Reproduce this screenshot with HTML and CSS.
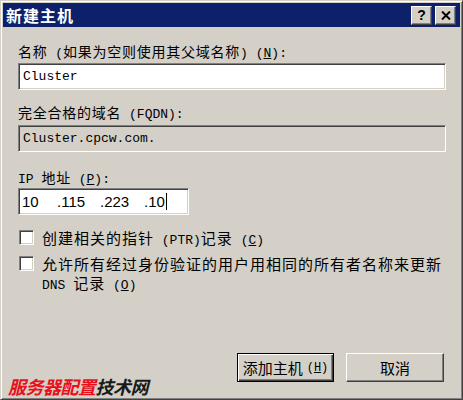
FILE: index.html
```html
<!DOCTYPE html>
<html lang="zh-CN">
<head>
<meta charset="utf-8">
<title>新建主机</title>
<link rel="stylesheet" href="styles.css">
</head>
<body>
<div class="window">
  <div class="titlebar">
    <span class="title">新建主机</span>
    <div class="title-buttons">
      <span class="tbtn help">?</span>
      <span class="tbtn close">
        <svg width="10" height="9" viewBox="0 0 10 9"><path d="M1 0.5 L9 8.5 M9 0.5 L1 8.5" stroke="#000" stroke-width="2"/></svg>
      </span>
    </div>
  </div>
  <div class="content">
    <div class="label l1">名称<span class="mono"> (</span>如果为空则使用其父域名称<span class="mono">) (<u>N</u>):</span></div>
    <div class="field mono">Cluster</div>
    <div class="label l2">完全合格的域名<span class="mono"> (FQDN):</span></div>
    <div class="field disabled mono">Cluster.cpcw.com.</div>
    <div class="label l3"><span class="mono">IP </span>地址<span class="mono"> (<u>P</u>):</span></div>
    <div class="field ip">
      <span class="oct">10</span><span class="oct">.115</span><span class="oct">.223</span><span class="oct last">.10</span><span class="caret"></span>
    </div>
    <div class="check-row r1">
      <span class="cb"></span>
      <span class="ctext">创建相关的指针<span class="mono"> (PTR)</span>记录<span class="mono"> (<u>C</u>)</span></span>
    </div>
    <div class="check-row r2">
      <span class="cb"></span>
      <span class="ctext">允许所有经过身份验证的用户用相同的所有者名称来更新<br><span class="mono">DNS </span>记录<span class="mono"> (<u>O</u>)</span></span>
    </div>
    <div class="buttons">
      <span class="btn default">添加主机<span class="gap"></span><span class="mono">(<u>H</u>)</span></span>
      <span class="btn">取消</span>
    </div>
  </div>
  <div class="watermark"><span class="red">服务器配置</span><span class="dark">技术网</span></div>
</div>
</body>
</html>
```
FILE: styles.css
```css
* { box-sizing: border-box; }
html, body { margin: 0; padding: 0; }
body {
  width: 463px;
  height: 400px;
  background: #d4d0c8;
  font-family: "Noto Sans CJK SC", "Liberation Sans", sans-serif;
  font-size: 14px;
  color: #000;
  overflow: hidden;
}
.window {
  position: relative;
  width: 463px;
  height: 400px;
  background: #d4d0c8;
  border: 1px solid;
  border-color: #d4d0c8 #404040 #404040 #d4d0c8;
  box-shadow: inset 1px 1px 0 #fff, inset -1px -1px 0 #808080;
  padding: 2px;
  display: flex;
  flex-direction: column;
}
.titlebar {
  height: 24px;
  background: #0c216a;
  display: flex;
  align-items: center;
  justify-content: space-between;
  padding: 0 4px 0 3px;
}
.title {
  color: #fff;
  font-weight: bold;
  font-size: 16px;
  letter-spacing: 1px;
  line-height: 24px;
}
.title-buttons {
  display: flex;
  gap: 3px;
}
.tbtn {
  width: 21px;
  height: 19px;
  background: #d4d0c8;
  border: 1px solid;
  border-color: #fff #404040 #404040 #fff;
  box-shadow: inset -1px -1px 0 #808080;
  display: flex;
  align-items: center;
  justify-content: center;
  font-family: "Liberation Sans", sans-serif;
  font-weight: bold;
  font-size: 14px;
  line-height: 1;
}
.content {
  flex: 1;
  display: flex;
  flex-direction: column;
  padding: 0 14px 0 15px;
}
.label {
  height: 16px;
  line-height: 16px;
  white-space: nowrap;
  letter-spacing: 0.75px;
}
.mono {
  font-family: "Liberation Mono", "DejaVu Sans Mono", monospace;
  letter-spacing: 0;
}
.label .mono { font-size: 13px; }
.l1 { margin-top: 16px; }
.l2 { margin-top: 14px; }
.l3 { margin-top: 17px; }
.field {
  height: 27px;
  background: #fff;
  border: 1px solid;
  border-color: #808080 #fff #fff #808080;
  box-shadow: inset 1px 1px 0 #404040, inset -1px -1px 0 #d4d0c8;
  padding: 0 4px;
  display: flex;
  align-items: center;
  font-size: 13px;
}
.l1 + .field { margin-top: 4px; }
.field.disabled {
  margin-top: 5px;
  background: #d4d0c8;
}
.field.ip {
  margin-top: 3px;
  width: 171px;
  font-family: "Liberation Sans", sans-serif;
  font-size: 15px;
  padding-left: 3px;
}
.oct { display: inline-block; }
.oct:first-child { width: 35px; }
.oct:nth-child(2) { width: 43px; }
.oct:nth-child(3) { width: 44px; }
.oct.last { width: auto; }
.caret {
  display: inline-block;
  width: 1px;
  height: 17px;
  background: #000;
  margin-left: 1px;
}
.check-row {
  display: flex;
  align-items: flex-start;
  line-height: 19px;
}
.check-row.r1 { margin-top: 13px; }
.check-row.r2 { margin-top: 4px; }
.cb {
  flex: none;
  width: 15px;
  height: 15px;
  margin: 2px 8px 0 1px;
  background: #fff;
  border: 1px solid;
  border-color: #808080 #fff #fff #808080;
  box-shadow: inset 1px 1px 0 #404040, inset -1px -1px 0 #d4d0c8;
}
.ctext {
  white-space: nowrap;
  font-size: 15px;
  letter-spacing: 1px;
}
.ctext .mono { font-size: 13px; }
.buttons {
  margin-top: auto;
  margin-bottom: 15px;
  display: flex;
  justify-content: flex-end;
  gap: 12px;
  padding-right: 2px;
}
.btn {
  width: 98px;
  height: 29px;
  background: #d4d0c8;
  border: 1px solid;
  border-color: #fff #404040 #404040 #fff;
  box-shadow: inset -1px -1px 0 #808080;
  display: flex;
  align-items: center;
  justify-content: center;
  font-size: 15px;
  white-space: nowrap;
}
.btn .gap { display: inline-block; width: 4px; }
.btn .mono { font-size: 12px; }
.btn.default {
  width: 97px;
  border: 1px solid #000;
  box-shadow: inset 1px 1px 0 #fff, inset -1px -1px 0 #404040, inset -2px -2px 0 #808080;
}
.watermark {
  position: absolute;
  left: 7px;
  bottom: 2px;
  font-size: 18px;
  font-weight: bold;
  font-style: italic;
  letter-spacing: -0.5px;
  line-height: 22px;
}
.watermark .red { color: #e8101a; }
.watermark .dark { color: #1a1a1a; }
```
